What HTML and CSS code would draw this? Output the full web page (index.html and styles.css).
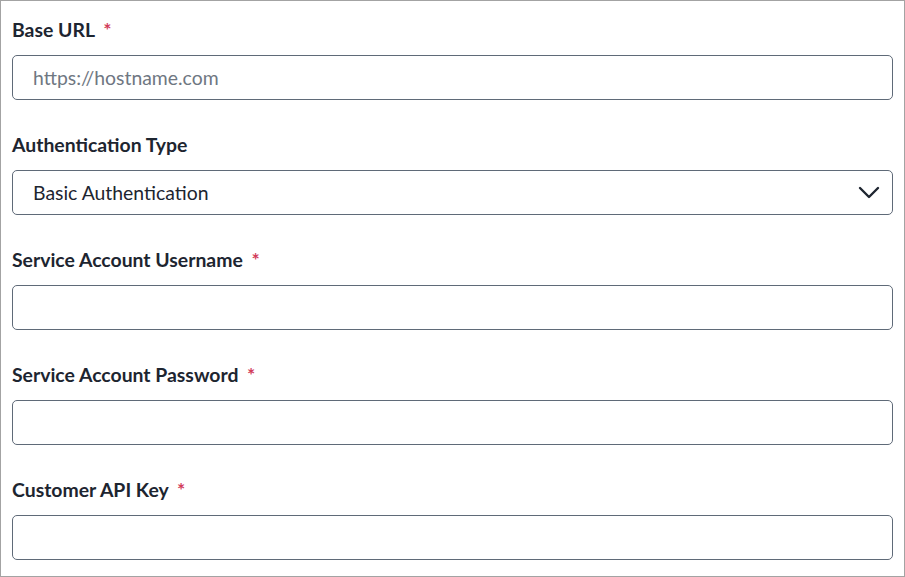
FILE: index.html
```html
<!DOCTYPE html>
<html>
<head>
<meta charset="utf-8">
<link rel="stylesheet" href="styles.css">
</head>
<body>
<div class="frame">
  <div class="field">
    <label class="label">Base URL <span class="req">*</span></label>
    <div class="input"><span class="placeholder">https://hostname.com</span></div>
  </div>
  <div class="field">
    <label class="label">Authentication Type</label>
    <div class="input select">
      <span class="value">Basic Authentication</span>
      <svg class="chev" width="22" height="14" viewBox="0 0 22 14"><path d="M2 2 L11 11 L20 2" fill="none" stroke="#1f2631" stroke-width="2.4" stroke-linecap="round" stroke-linejoin="round"/></svg>
    </div>
  </div>
  <div class="field">
    <label class="label">Service Account Username <span class="req">*</span></label>
    <div class="input"></div>
  </div>
  <div class="field">
    <label class="label">Service Account Password <span class="req">*</span></label>
    <div class="input"></div>
  </div>
  <div class="field">
    <label class="label">Customer API Key <span class="req">*</span></label>
    <div class="input"></div>
  </div>
</div>
</body>
</html>
```

FILE: styles.css
```css
html, body {
  margin: 0;
  padding: 0;
  background: #ffffff;
}
.frame {
  box-sizing: border-box;
  width: 905px;
  height: 577px;
  border: 1px solid #a3a3a3;
  padding: 17px 11px 0 11px;
  font-family: Lato, "Liberation Sans", sans-serif;
  display: flex;
  flex-direction: column;
  gap: 33px;
}
.field {
  display: flex;
  flex-direction: column;
  gap: 13px;
}
.label {
  display: block;
  height: 24px;
  line-height: 24px;
  font-size: 19.4px;
  font-weight: 700;
  color: #1d2530;
}
.req {
  color: #d23c5a;
  margin-left: 4px;
}
.input {
  box-sizing: border-box;
  height: 45px;
  border: 1px solid #5f6a78;
  border-radius: 5px;
  display: flex;
  align-items: center;
  padding: 0 20px;
  font-size: 19.4px;
}
.placeholder {
  color: #6f7782;
}
.value {
  color: #1d2530;
}
.select {
  justify-content: space-between;
  padding-right: 12px;
}
```
